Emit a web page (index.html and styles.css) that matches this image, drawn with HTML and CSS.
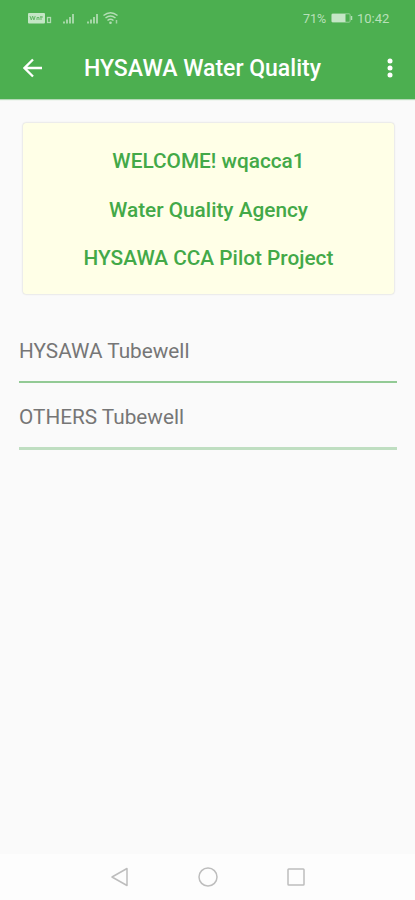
FILE: index.html
```html
<!DOCTYPE html>
<html lang="en">
<head>
<meta charset="utf-8">
<title>HYSAWA Water Quality</title>
<link rel="stylesheet" href="styles.css">
</head>
<body>
<div class="screen">
  <header class="header">
    <div class="status">
      <svg class="signals" width="92" height="14" viewBox="0 0 92 14" aria-hidden="true">
        <rect x="0" y="2" width="17" height="10.5" rx="1" fill="#c4e6c5"/>
        <path d="M2 5l1.3 4 1.3-4 1.3 4L7.2 5M9 9V6.5h2V9M13 5v4M12 6h3" fill="none" stroke="#65b968" stroke-width="1"/>
        <rect x="19.5" y="6.5" width="3" height="5" fill="none" stroke="#b0dcb2" stroke-width="1.3"/>
        <path d="M36 10.5v2M39 8.500v4M42 6v6.500M45 3v9.500" stroke="#a9d9ab" stroke-width="1.900"/>
        <path d="M60 10.500v2M63 8.500v4M66 6v6.500M69 3v9.500" stroke="#a9d9ab" stroke-width="1.900"/>
        <path d="M75.500 4.500q7-5.500 14 0M77.500 7q5-4 10 0M79.500 9.500q3-2.500 6 0" fill="none" stroke="#b4deb5" stroke-width="1.500"/>
        <circle cx="82.500" cy="11.700" r="1.300" fill="#b4deb5"/>
        <path d="M88.500 9v3.500" stroke="#a0d5a2" stroke-width="1.500"/>
      </svg>
      <div class="power">
        <span class="percent">71%</span>
        <svg width="22" height="10" viewBox="0 0 22 10" aria-hidden="true">
          <rect x=".6" y=".8" width="18.500" height="8.400" rx="1" fill="none" stroke="#94cf96" stroke-width="1"/>
          <rect x="1" y="1" width="13.500" height="8" fill="#c5e6c6"/>
          <path d="M20.500 3v4" stroke="#b4deb5" stroke-width="1.500"/>
        </svg>
        <span class="clock">10:42</span>
      </div>
    </div>
    <div class="toolbar">
      <svg class="back" width="20" height="20" viewBox="0 0 20 20" aria-hidden="true"><path d="M19 10H2M10 1.500L1.500 10l8.500 8.500" fill="none" stroke="#fff" stroke-width="2.300"/></svg>
      <h1 class="title">HYSAWA Water Quality</h1>
      <svg class="more" width="6" height="20" viewBox="0 0 6 20" aria-hidden="true"><g fill="#fff"><circle cx="3" cy="3" r="2.500"/><circle cx="3" cy="10" r="2.500"/><circle cx="3" cy="17" r="2.500"/></g></svg>
    </div>
  </header>
  <main class="content">
    <section class="card">
      <p class="welcome">WELCOME! wqacca1</p>
      <p class="agency">Water Quality Agency</p>
      <p class="project">HYSAWA CCA Pilot Project</p>
    </section>
    <ul class="list">
      <li class="item">HYSAWA Tubewell</li>
      <li class="item item-last">OTHERS Tubewell</li>
    </ul>
  </main>
  <nav class="navbar">
    <svg width="20" height="22" viewBox="0 0 20 22" aria-hidden="true"><path d="M17 2.500v17L2 11z"/></svg>
    <svg width="20" height="22" viewBox="0 0 20 22" aria-hidden="true"><circle cx="10" cy="11" r="9"/></svg>
    <svg width="20" height="22" viewBox="0 0 20 22" aria-hidden="true"><rect x="2" y="3" width="16" height="16" rx=".8"/></svg>
  </nav>
</div>
</body>
</html>
```
FILE: styles.css
```css
* { box-sizing: border-box; }
body, h1, p, ul { margin: 0; padding: 0; }
body { font-family: Roboto, "Liberation Sans", sans-serif; background: #fafafa; }
svg { display: block; flex: none; }
.screen { height: 900px; display: flex; flex-direction: column; }
.header { height: 99px; background: #4caf50; box-shadow: 0 1px 1px #b5d9b7; }
.status { height: 36px; padding: 0 25px 0 28px; display: flex; align-items: center; justify-content: space-between; }
.power { display: flex; align-items: center; color: #b9e0ba; font-size: 12.500px; white-space: nowrap; }
.percent { width: 28px; }
.clock { width: 33px; margin-left: 4px; font-size: 13px; }
.toolbar { height: 63px; padding: 0 22px 0 23px; display: flex; align-items: center; }
.title { margin-left: 41px; padding-top: 2px; flex: 1; color: #fff; font-size: 23px; font-weight: 500; line-height: 28px; white-space: nowrap; }
.content { flex: 1; padding: 24px 18px 0 19px; }
.card { height: 171px; margin: 0 3px 0 4px; padding-top: 14px; background: #ffffe7; border-radius: 3px; box-shadow: 0 0 2px rgba(0, 0, 0, .22); text-align: center; }
.card p { height: 48.500px; line-height: 48.500px; color: #43a948; font-size: 20.800px; font-weight: 500; white-space: nowrap; }
.list { list-style: none; margin-top: 23px; }
.item { height: 66px; padding-top: 20px; line-height: 28px; color: #767676; font-size: 20.750px; border-bottom: 2px solid #92ca95; }
.item-last { border-bottom: 3px solid #bfdec1; height: 67px; }
.navbar { height: 46px; background: #fdfdfd; display: flex; justify-content: center; align-items: center; gap: 68px; }
.navbar svg { fill: none; stroke: #bdbdbd; stroke-width: 1.500; stroke-linejoin: round; }
```
